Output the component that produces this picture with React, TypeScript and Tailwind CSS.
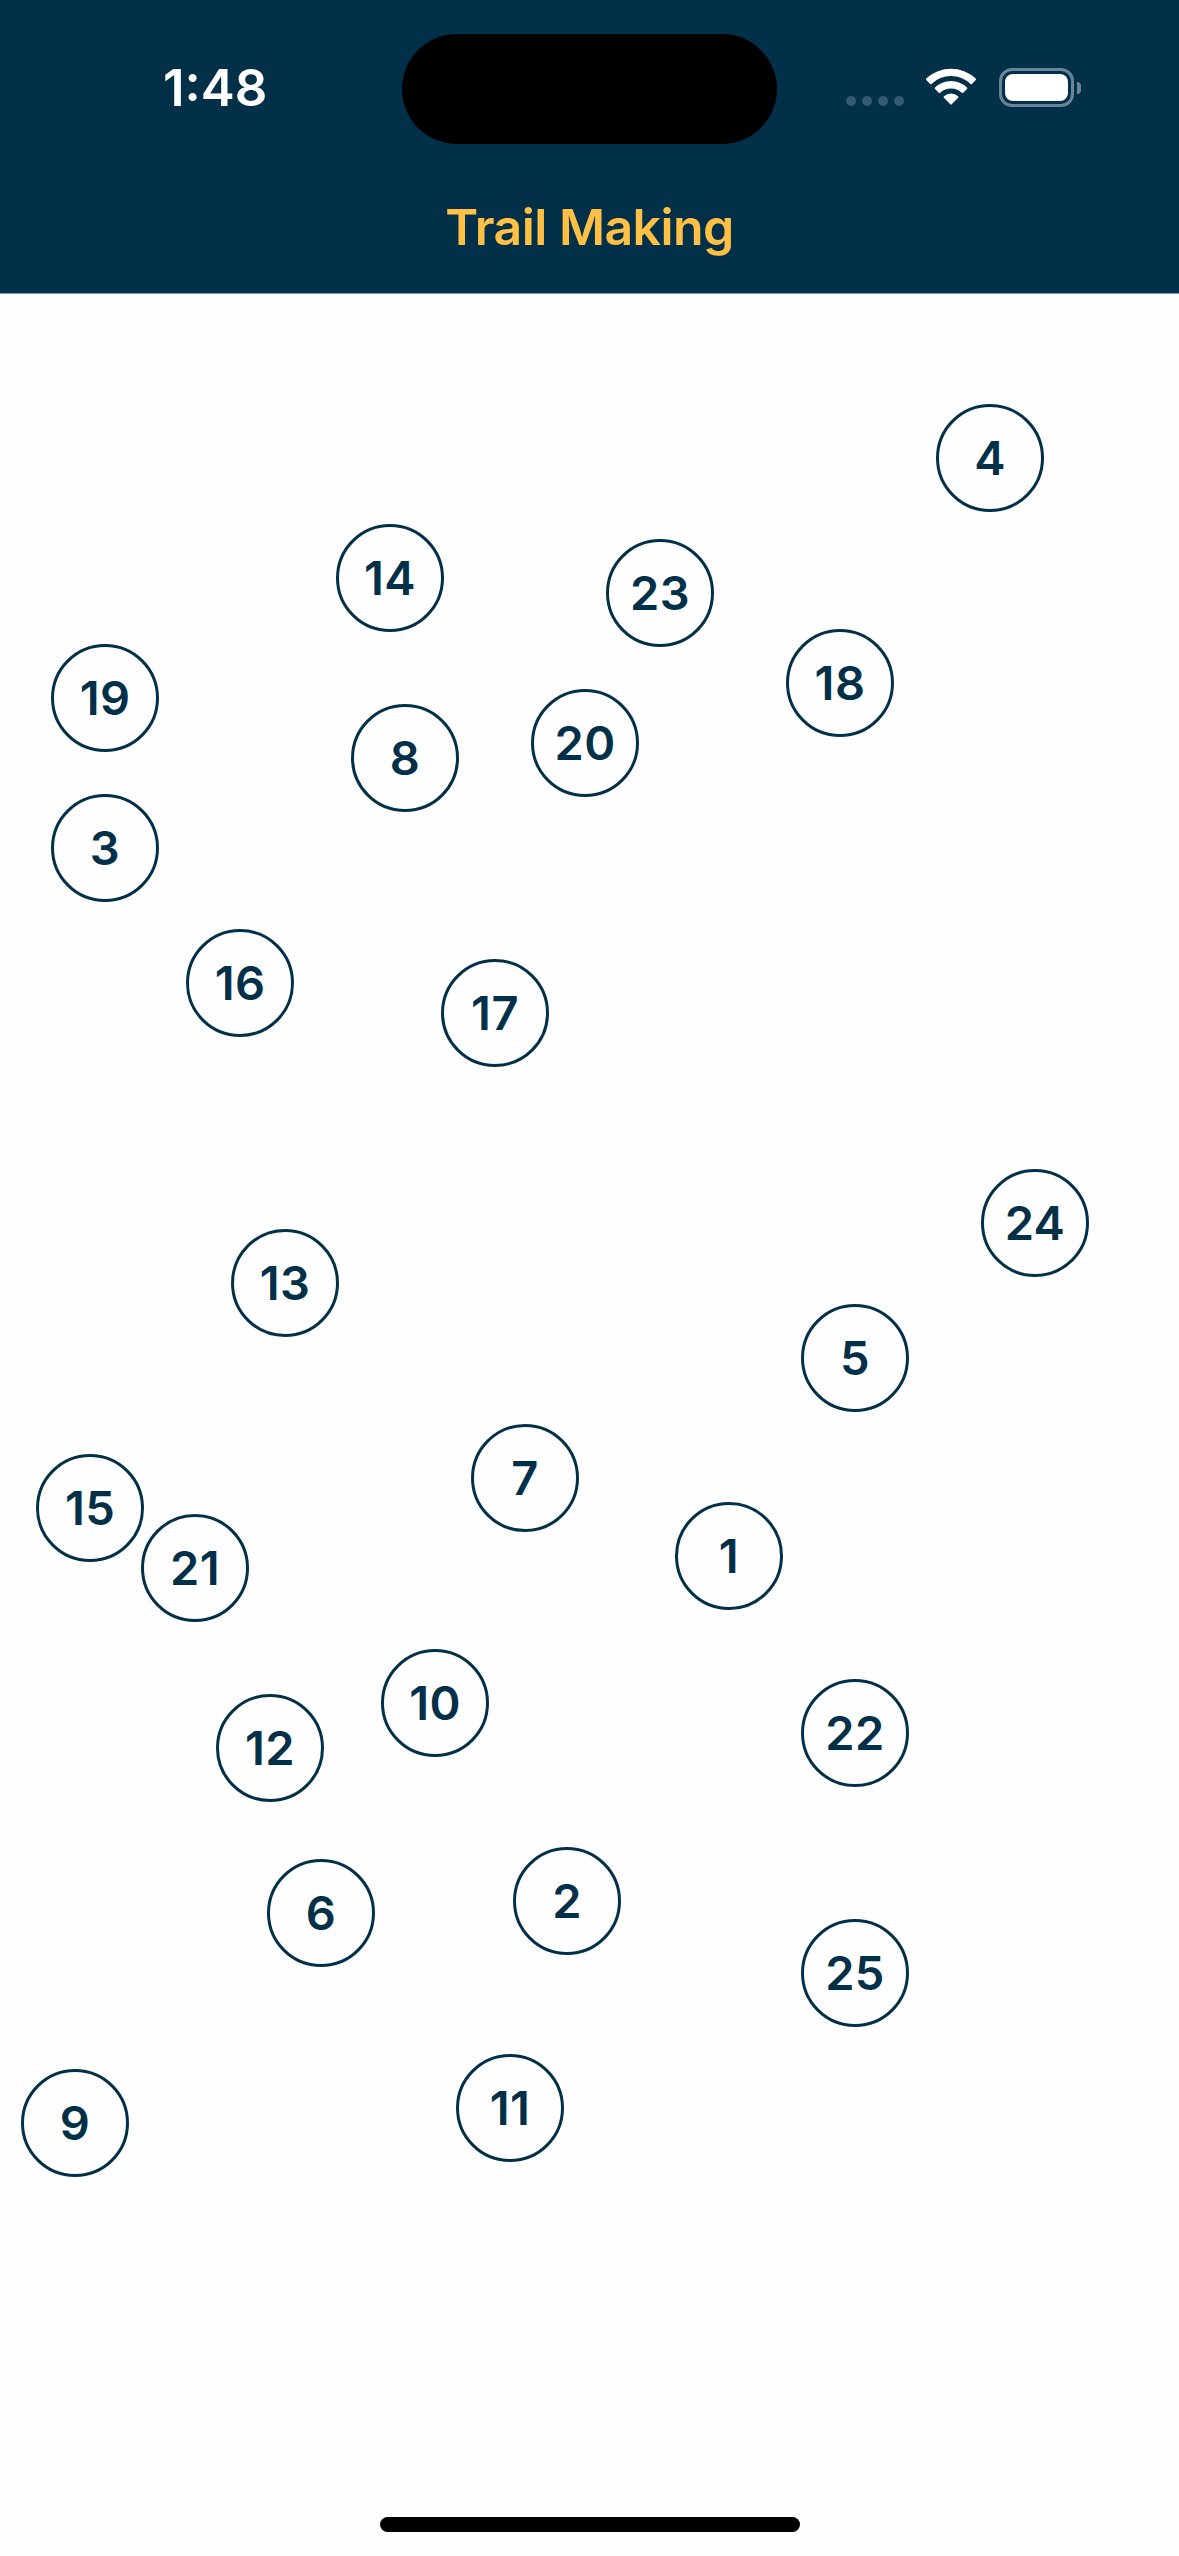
type Node = { n: number; x: number; y: number };

// Node centres, measured from the top-left corner of the board.
const nodes: Node[] = [
  { n: 1, x: 729, y: 1263 },
  { n: 2, x: 567, y: 1608 },
  { n: 3, x: 105, y: 555 },
  { n: 4, x: 990, y: 165 },
  { n: 5, x: 855, y: 1065 },
  { n: 6, x: 321, y: 1620 },
  { n: 7, x: 525, y: 1185 },
  { n: 8, x: 405, y: 465 },
  { n: 9, x: 75, y: 1830 },
  { n: 10, x: 435, y: 1410 },
  { n: 11, x: 510, y: 1815 },
  { n: 12, x: 270, y: 1455 },
  { n: 13, x: 285, y: 990 },
  { n: 14, x: 390, y: 285 },
  { n: 15, x: 90, y: 1215 },
  { n: 16, x: 240, y: 690 },
  { n: 17, x: 495, y: 720 },
  { n: 18, x: 840, y: 390 },
  { n: 19, x: 105, y: 405 },
  { n: 20, x: 585, y: 450 },
  { n: 21, x: 195, y: 1275 },
  { n: 22, x: 855, y: 1440 },
  { n: 23, x: 660, y: 300 },
  { n: 24, x: 1035, y: 930 },
  { n: 25, x: 855, y: 1680 },
];

function Wifi() {
  return (
    <svg className="h-[38px] w-[50px]" viewBox="0 0 17 12.6" fill="white">
      <path d="M8.5 2.6c2.47 0 4.84.95 6.63 2.65.13.13.35.13.48 0l1.29-1.3a.35.35 0 0 0 0-.5c-4.7-4.5-12.1-4.5-16.8 0a.35.35 0 0 0 0 .5l1.29 1.3c.13.13.35.13.48 0A9.63 9.63 0 0 1 8.5 2.6Z" />
      <path d="M8.5 6.85c1.35 0 2.66.5 3.66 1.42.14.13.35.12.49-.01l1.29-1.3a.36.36 0 0 0 0-.51 7.92 7.92 0 0 0-10.88 0 .36.36 0 0 0 0 .51l1.29 1.3c.13.13.35.14.49.01A5.4 5.4 0 0 1 8.5 6.85Z" />
      <path d="M11.02 9.68a.35.35 0 0 1-.1.26l-2.18 2.25a.34.34 0 0 1-.48 0L6.08 9.94a.35.35 0 0 1 .01-.51 3.7 3.7 0 0 1 4.82 0c.07.06.11.15.11.25Z" />
    </svg>
  );
}

function Battery() {
  return (
    <div className="flex items-center gap-[3px]">
      <div className="h-[39px] w-[75px] rounded-[13px] border-[3px] border-[#698499] p-[3px]">
        <div className="h-full w-full rounded-[8px] bg-white" />
      </div>
      <div className="h-[12px] w-[4px] rounded-r-full bg-[#698499]" />
    </div>
  );
}

function StatusBar() {
  return (
    <div className="grid h-[176px] grid-cols-[402px_375px_1fr] pt-[34px]">
      <div className="pt-[26px] pl-[163px] text-[51px] leading-[56px] font-semibold text-white">
        1:48
      </div>
      <div className="h-[110px] rounded-full bg-black" />
      <div className="flex pt-[34px] pl-[69px]">
        <div className="flex gap-[6px] pt-[28px]">
          {[0, 1, 2, 3].map((i) => (
            <span key={i} className="size-[10px] rounded-full bg-[#35596f]" />
          ))}
        </div>
        <div className="ml-[22px]">
          <Wifi />
        </div>
        <div className="ml-[23px]">
          <Battery />
        </div>
      </div>
    </div>
  );
}

export default function App() {
  return (
    <div className="flex h-[2556px] w-[1179px] flex-col overflow-hidden bg-[#fefefe] font-['Inter',sans-serif]">
      <header className="h-[294px] shrink-0 border-b border-[#8098a4] bg-[#023049]">
        <StatusBar />
        <h1 className="text-center text-[50px] leading-[102px] font-semibold tracking-[-0.55px] text-[#ffc045]">
          Trail Making
        </h1>
      </header>
      <main className="relative -mt-px grow">
        {nodes.map(({ n, x, y }) => (
          <button
            key={n}
            className="absolute flex size-[108px] -translate-x-1/2 -translate-y-1/2 items-center justify-center rounded-full border-[3px] border-[#023049] pb-[2px] text-[47px] leading-none font-semibold tracking-[0.4px] text-[#023049]"
            style={{ left: x, top: y }}
          >
            {n}
          </button>
        ))}
      </main>
      <footer className="flex shrink-0 justify-center pb-[24px]">
        <div className="h-[15px] w-[420px] rounded-full bg-black" />
      </footer>
    </div>
  );
}
